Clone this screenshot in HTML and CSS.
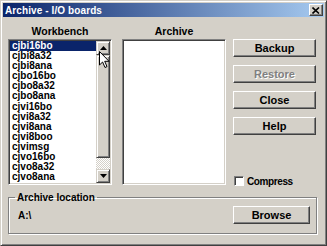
FILE: index.html
```html
<!DOCTYPE html>
<html lang="en">
<head>
  <meta charset="UTF-8" />
  <title>Archive - I/O boards</title>
  <link rel="stylesheet" href="styles.css">
</head>
<body>
  <div class="window">
    <div class="titlebar">
      <span class="title">Archive - I/O boards</span>
      <span class="close-btn">
        <svg width="8" height="7" viewBox="0 0 8 7"><path d="M0.5 0.5 L7 6.5 M7 0.5 L0.5 6.5" stroke="#000" stroke-width="1.6"/></svg>
      </span>
    </div>

    <div class="main">
      <div class="col col-work">
        <div class="col-head">Workbench</div>
        <div class="listbox">
          <ul class="items">
            <li class="selected">cjbi16bo</li>
            <li>cjbi8a32</li>
            <li>cjbi8ana</li>
            <li>cjbo16bo</li>
            <li>cjbo8a32</li>
            <li>cjbo8ana</li>
            <li>cjvi16bo</li>
            <li>cjvi8a32</li>
            <li>cjvi8ana</li>
            <li>cjvi8boo</li>
            <li>cjvimsg</li>
            <li>cjvo16bo</li>
            <li>cjvo8a32</li>
            <li>cjvo8ana</li>
          </ul>
          <div class="scrollbar">
            <div class="sb-btn">
              <svg width="7" height="4" viewBox="0 0 7 4"><path d="M3.5 0 L7 4 L0 4 Z" fill="#000"/></svg>
            </div>
            <div class="sb-thumb"></div>
            <div class="sb-track"></div>
            <div class="sb-btn">
              <svg width="7" height="4" viewBox="0 0 7 4"><path d="M0 0 L7 0 L3.5 4 Z" fill="#000"/></svg>
            </div>
          </div>
        </div>
      </div>

      <div class="col col-archive">
        <div class="col-head">Archive</div>
        <div class="listbox"></div>
      </div>

      <div class="col-actions">
        <button class="btn">Backup</button>
        <button class="btn" disabled>Restore</button>
        <button class="btn">Close</button>
        <button class="btn">Help</button>
        <label class="check"><span class="box"></span>Compress</label>
      </div>
    </div>

    <fieldset class="location">
      <legend>Archive location</legend>
      <span class="path">A:\</span>
      <button class="btn browse">Browse</button>
    </fieldset>

    <!-- mouse pointer over the scrollbar -->
    <svg class="cursor" width="12" height="18" viewBox="0 0 12 18">
      <path d="M0.5 0.5 L0.5 14 L3.6 11 L6 16.5 L8 15.6 L5.7 10.3 L10 10.3 Z" fill="#fff" stroke="#000" stroke-width="1"/>
    </svg>
  </div>
</body>
</html>
```

FILE: styles.css
```css
body {
  margin: 0;
  background: #d4d0c8;
}
.window {
  position: relative;
  width: 327px;
  height: 246px;
  box-sizing: border-box;
  background: #d4d0c8;
  border: 1px solid;
  border-color: #d4d0c8 #404040 #404040 #d4d0c8;
  box-shadow: inset 1px 1px #fff, inset -1px -1px #808080;
  padding: 2px;
  font: bold 10px "Liberation Sans", Arial, sans-serif;
  color: #000;
}
.titlebar {
  height: 14px;
  display: flex;
  align-items: center;
  justify-content: space-between;
  padding: 0 1px 0 2px;
  background: linear-gradient(to right, #0a246a, #a6caf0);
  color: #fff;
}
.title {
  font-size: 10px;
  letter-spacing: 0.1px;
}
.close-btn {
  width: 14px;
  height: 12px;
  box-sizing: border-box;
  display: flex;
  align-items: center;
  justify-content: center;
  background: #d4d0c8;
  border: 1px solid;
  border-color: #fff #404040 #404040 #fff;
  box-shadow: inset -1px -1px #808080;
}
.main {
  display: flex;
  padding: 8px 0 0 5px;
}
.col {
  width: 104px;
}
.col-archive {
  margin-left: 10px;
}
.col-head {
  height: 13px;
  line-height: 13px;
  text-align: center;
  margin-bottom: 1px;
  font-size: 10.5px;
}
.listbox {
  height: 146px;
  box-sizing: border-box;
  display: flex;
  background: #fff;
  border: 1px solid;
  border-color: #808080 #fff #fff #808080;
  box-shadow: inset 1px 1px #404040, inset -1px -1px #d4d0c8;
  padding: 1px;
}
.items {
  flex: 1;
  list-style: none;
  margin: 0;
  padding: 0;
  overflow: hidden;
}
.items li {
  height: 10.1px;
  line-height: 10.1px;
  padding-left: 2px;
}
.items li.selected {
  background: #0a246a;
  color: #fff;
}
.scrollbar {
  width: 14px;
  display: flex;
  flex-direction: column;
}
.sb-btn,
.sb-thumb {
  box-sizing: border-box;
  background: #d4d0c8;
  border: 1px solid;
  border-color: #d4d0c8 #404040 #404040 #d4d0c8;
  box-shadow: inset 1px 1px #fff, inset -1px -1px #808080;
}
.sb-btn {
  height: 14px;
  display: flex;
  align-items: center;
  justify-content: center;
}
.sb-thumb {
  height: 103px;
}
.sb-track {
  flex: 1;
  background: repeating-conic-gradient(#fff 0 25%, #d4d0c8 0 50%) 0 0 / 2px 2px;
}
.col-actions {
  width: 83px;
  margin-left: 7px;
  padding-top: 14px;
  display: flex;
  flex-direction: column;
  gap: 8px;
}
.btn {
  height: 18px;
  box-sizing: border-box;
  padding: 0;
  background: #d4d0c8;
  border: 1px solid;
  border-color: #fff #404040 #404040 #fff;
  box-shadow: inset -1px -1px #808080;
  font: inherit;
  font-size: 11px;
  color: #000;
}
.btn:disabled {
  color: #808080;
  text-shadow: 1px 1px #fff;
}
.check {
  margin-top: auto;
  margin-bottom: -2px;
  height: 12px;
  display: flex;
  align-items: center;
  gap: 3px;
  margin-left: 1px;
  letter-spacing: -0.4px;
}
.box {
  width: 10px;
  height: 10px;
  box-sizing: border-box;
  background: #fff;
  border: 1px solid;
  border-color: #808080 #fff #fff #808080;
  box-shadow: inset 1px 1px #404040;
}
.location {
  margin: 6px 7px 0 5px;
  padding: 2px 6px 9px 9px;
  display: flex;
  align-items: center;
  justify-content: space-between;
  border: 1px solid #808080;
  box-shadow: inset 1px 1px #fff, 1px 1px #fff;
}
.location legend {
  padding: 0 2px;
  margin-left: -3px;
  line-height: 13px;
}
.browse {
  width: 77px;
}
.cursor {
  position: absolute;
  left: 98px;
  top: 50px;
}
```
